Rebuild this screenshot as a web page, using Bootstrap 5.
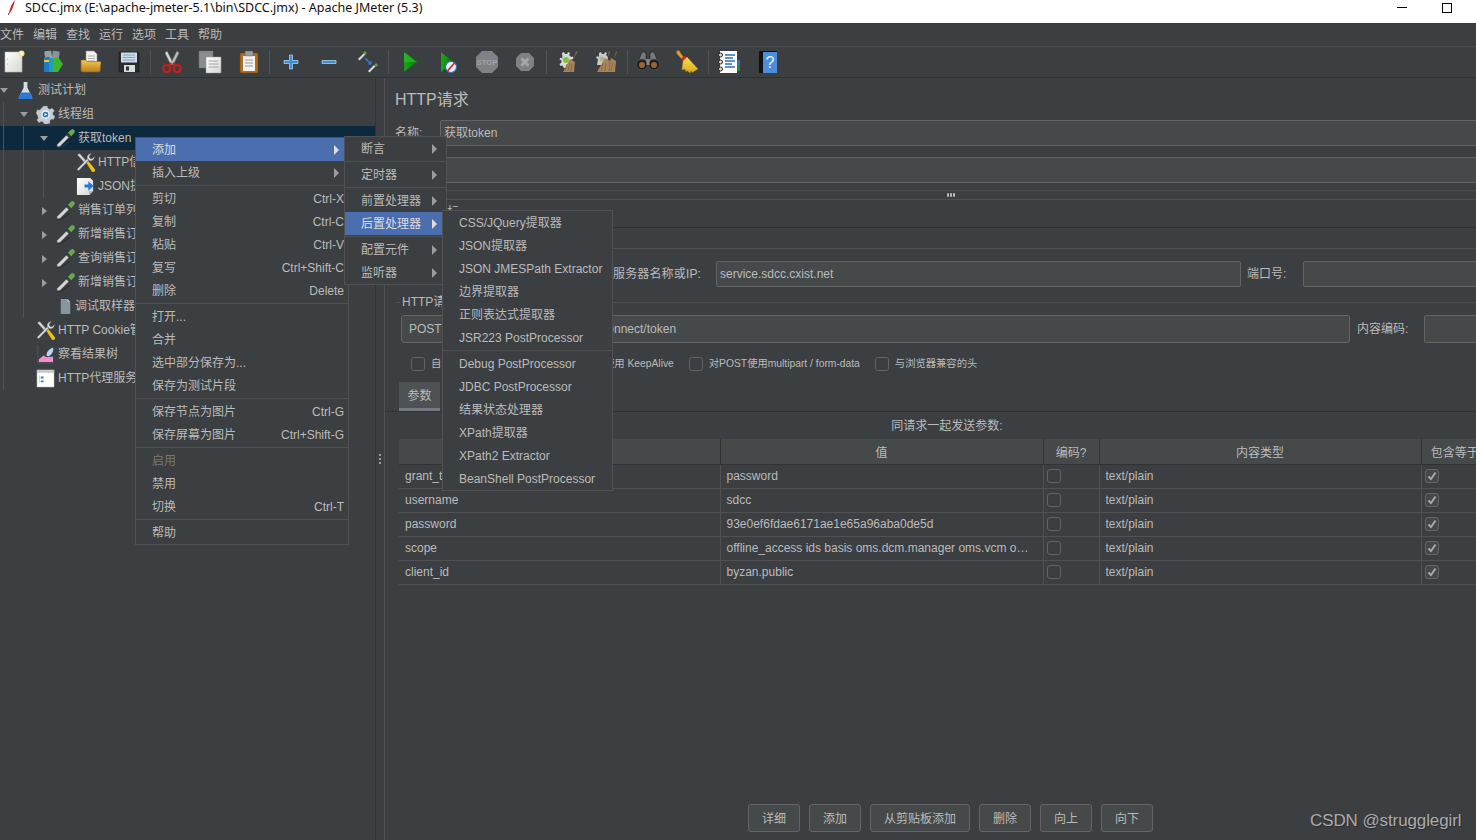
<!DOCTYPE html>
<html lang="zh-CN">
<head>
  <meta charset="UTF-8">
  <meta name="viewport" content="width=device-width,initial-scale=1">
  <title>SDCC.jmx - Apache JMeter (5.3)</title>
  <link href="https://cdn.jsdelivr.net/npm/bootstrap@5.3.3/dist/css/bootstrap.min.css" rel="stylesheet">
  <style>
    html,body{height:100%;overflow:hidden}
    body{background:#3c3f41;color:#bbb;font:12px/1.2 "Liberation Sans","Noto Sans CJK SC",sans-serif}
    .app{height:840px;width:1476px;overflow:hidden;position:relative}
    .win-title{height:23px;background:#fff;color:#111;font:12.5px "Noto Sans","Noto Sans CJK SC",sans-serif;padding:0 0 8px 8px;gap:9px;flex:none}
    .win-btns{margin-left:auto;gap:35px;padding-right:24px}
    .win-min{width:10px;height:1px;background:#000}
    .win-max{width:10px;height:10px;border:1px solid #000}
    .menu-strip{height:24px;gap:9px;padding-top:1px;border-bottom:1px solid #515151;flex:none}
    .tool-strip{height:30px;margin-left:-5px;flex:none}
    .tool-line{height:1px;background:#2f3233;flex:none}
    .tb-btn{width:38.4px;flex:none}
    .tb-btn svg{width:24px;height:24px;display:block;margin:0 auto}
    .tb-sep{width:4px;flex:none;height:24px;display:flex;justify-content:center}
    .tb-sep::before{content:"";width:1px;background:#515151}
    .main-area{flex:1;min-height:0}
    .tree-pane{width:375px;flex:none;overflow:hidden;isolation:isolate}
    .tn-row{height:24px;padding-top:1px;position:relative;white-space:nowrap}
    .tn-sel::before{content:"";position:absolute;inset:0 -400px;background:#0d293e;z-index:-1}
    .tn-arrow{width:16px;flex:none}
    .tn-arrow i{display:block}
    .arr-down{width:0;height:0;border:4px solid transparent;border-top:5px solid #9a9da0;border-bottom:0}
    .arr-right{width:0;height:0;margin-left:2px;border:4px solid transparent;border-left:5px solid #9a9da0;border-right:0}
    .tn-icon{width:22px;flex:none}
    .tn-icon svg{width:19px;height:19px;display:block}
    .tn-icon-narrow{width:19px}
    .tn-kids{margin-left:3px;border-left:1px solid #515151;padding-left:16px}
    .split-bar{width:10px;flex:none;border-left:1px solid #323232;border-right:1px solid #515151;gap:2px}
    .split-bar i{width:2px;height:2px;border-radius:50%;background:#bbb}
    .http-pane{flex:1;min-width:0;overflow:hidden}
    .pane-head{height:42px;padding:13px 0 0 10px;font-size:16px;line-height:18px;flex:none}
    .name-row{padding-left:10px;height:26px;flex:none}
    .name-row label{width:45px;flex:none;padding-top:1px}
    .j-input{background:#45494a;border:1px solid #646464;border-radius:2px;color:#bbb;font-size:12px;line-height:1;padding:0 3px;height:26px;box-shadow:none}
    .j-input:focus{background:#45494a;color:#bbb;border-color:#646464;box-shadow:none}
    .name-row .j-input{width:1100px;flex:none;padding-bottom:3px}
    .mt-11{margin-top:11px}
    .hsplit{height:10px;margin-top:7px;padding-left:40px;gap:1px;border-top:1px solid #515151;border-bottom:1px solid #515151;flex:none}
    .hsplit i{width:2px;height:4px;border-radius:1px;background:#bbb}
    .tab-top{height:28px;border-bottom:1px solid #323232;padding:6px 0 0 62px;flex:none;line-height:1}
    .tab-gap{height:21px;border-bottom:1px solid #515151;flex:none}
    .server-row{margin-top:12px;height:26px;padding-left:228px;flex:none}
    .server-row .j-input{height:100%}
    .srv-label{width:103px;flex:none;white-space:nowrap;letter-spacing:.15px}
    .srv-host{width:525px;flex:none;margin-right:6px}
    .srv-port-label{width:56px;flex:none;white-space:nowrap}
    .srv-port{width:300px;flex:none}
    .group-line{height:28px;margin-left:11px;padding-top:2px;flex:none}
    .group-line b{font-weight:400;width:4px;height:1px;background:#515151;margin-right:2px}
    .group-line span{flex:none}
    .group-line u{flex:1;height:1px;background:#515151;text-decoration:none}
    .path-row{height:28px;padding-left:16px;flex:none}
    .path-row .j-input{height:100%;padding-left:7px}
    .path-method{width:100px;flex:none;border-radius:3px}
    .path-url{width:760px;flex:none;margin-left:89px}
    .path-enc-label{width:60px;flex:none;margin:0 7px;white-space:nowrap}
    .path-enc{width:200px;flex:none}
    .opt-row{height:39px;padding:3px 0 0 26px;font-size:10.3px;gap:15px;flex:none;white-space:nowrap}
    .j-check{width:14px;height:14px;margin:0;flex:none;background-color:transparent;border:1px solid #646464;border-radius:2px;box-shadow:none}
    .j-check:checked{background-color:#45494a;border-color:#646464;background-image:url("data:image/svg+xml,%3csvg xmlns='http://www.w3.org/2000/svg' viewBox='0 0 14 14'%3e%3cpath fill='none' stroke='%23a9a9a9' stroke-width='2' d='M3.500 7.500l2.500 2.500 4.500-6.500'/%3e%3c/svg%3e");background-size:14px}
    .opt-item{gap:6px}
    .tab-strip{height:30px;padding-left:14px;border-bottom:1px solid #323232;flex:none}
    .tab-on{width:41px;height:29px;padding-top:3px;background:#4e5254;border-bottom:3px solid #747a80}
    .param-wrap{width:1096px;margin-left:14px;flex:none}
    .param-cap{height:27px;padding-top:2px}
    .param-tb{--bs-table-bg:transparent;--bs-table-color:#bbb;--bs-table-border-color:#515151;table-layout:fixed;width:1096px;font-size:12px;color:#bbb;margin:0}
    .param-tb th,.param-tb td{padding:0 6px;height:24px;vertical-align:middle;border-bottom:1px solid #515151;border-right:1px solid #515151;box-shadow:none;white-space:nowrap;overflow:hidden;text-overflow:ellipsis;line-height:1}
    .param-tb td.cell-check{padding-left:3px}
    .param-tb th{height:25px;padding-top:3px;background:#45494a;font-weight:400;text-align:center;border-color:#323232}
    .c-name{width:321px}.c-val{width:323px}.c-enc{width:56px}.c-type{width:322px}.c-eq{width:74px}
    .foot-btns{margin-top:auto;padding:0 0 8px 363px;gap:9px;flex:none}
    .j-btn{height:28px;width:52px;padding:2px 0 0;background:#45494a;border:1px solid #646464;border-radius:3px;color:#bbb;font-size:12px;line-height:1}
    .j-btn-wide{width:100px}
    .pop-menu{position:absolute;display:block;margin:0;padding:0;min-width:0;background:#3c3f41;border:1px solid #515151;border-radius:0;font-size:12px;--bs-dropdown-bg:#3c3f41}
    .pop-main{left:135px;top:137px;width:214px;z-index:1001}
    .pop-sub{left:344px;top:136px;width:103px;z-index:1002}
    .pop-post{left:442px;top:210px;width:171px;z-index:1003}
    .pop-menu .dropdown-item{height:23px;padding:0 4px 0 16px;color:#bbb;display:flex;align-items:center;justify-content:space-between;white-space:nowrap;line-height:1}
    .pop-menu .dropdown-item.active{background:#4b6eaf;color:#ddd}
    .pop-menu .dropdown-item.disabled{color:#777;background:none}
    .pop-menu .dropdown-divider{margin:1px 0;border-top:1px solid #515151;opacity:1}
    .pop-main .dropdown-item:nth-child(-n+2){padding-right:9px}
    .pop-sub .dropdown-item{padding-right:9px}
    .pop-arrow{width:0;height:0;border:5px solid transparent;border-left:5px solid #9a9da0;border-right:0}
    .active .pop-arrow{border-left-color:#ddd}
    .csdn-mark{position:absolute;left:1310px;top:810px;font-size:17px;line-height:22px;color:#a9abac;text-shadow:1px 1px 1px #2a2c2d;white-space:nowrap;letter-spacing:-.1px;z-index:1100}
  </style>
</head>
<body>
<svg width="0" height="0" class="position-absolute">
  <defs>
    <linearGradient id="gPage" x1="0" y1="0" x2="1" y2="1"><stop offset="0" stop-color="#fff"/><stop offset="1" stop-color="#d5d6d2"/></linearGradient>
    <linearGradient id="gFold" x1="0" y1="0" x2="0" y2="1"><stop offset="0" stop-color="#f4c657"/><stop offset="1" stop-color="#b9801c"/></linearGradient>
    <linearGradient id="gPlay" x1="0" y1="0" x2="1" y2="0"><stop offset="0" stop-color="#1aa51a"/><stop offset="1" stop-color="#0b7d0b"/></linearGradient>
    <linearGradient id="gBroom" x1="0" y1="0" x2="0" y2="1"><stop offset="0" stop-color="#f7e04e"/><stop offset="1" stop-color="#dba91c"/></linearGradient>
    <symbol id="i-new" viewBox="0 0 24 24"><rect x="3" y="2" width="17" height="20" fill="url(#gPage)" stroke="#b9b9b4" stroke-width=".6"/><circle cx="5.500" cy="9" r=".5" fill="#999"/><circle cx="5.500" cy="14" r=".5" fill="#999"/><circle cx="19.500" cy="3.500" r="3" fill="#f3e58a"/><circle cx="19.500" cy="3.500" r="1.500" fill="#fff9c9"/></symbol>
    <symbol id="i-tpl" viewBox="0 0 24 24"><rect x="4" y="1" width="7" height="13" rx="1" fill="#9aa0a3" transform="rotate(-8 7 7)"/><rect x="11" y="1" width="7" height="13" rx="1" fill="#8b9194" transform="rotate(8 14 7)"/><rect x="3" y="7" width="6" height="15" rx="1" fill="#1f7bc4"/><rect x="8" y="8" width="5" height="14" fill="#1da2b5"/><path d="M12 8h5v-1l5 7-5 8h-5z" fill="#3eb52b"/><path d="M3 10h5v2H3z" fill="#f0c636"/></symbol>
    <symbol id="i-open" viewBox="0 0 24 24"><path d="M7 1h8l3 3v11H7z" fill="#f2f2ee" stroke="#8d8d88" stroke-width=".6"/><path d="M9 6h7M9 8.500h7M9 11h7" stroke="#9a9a95" stroke-width=".8"/><path d="M2 10h5l1 1.500h13a1 1 0 0 1 1 1L21 21a1 1 0 0 1-1 1H4a2 2 0 0 1-2-2z" fill="url(#gFold)" stroke="#8f6313" stroke-width=".6"/></symbol>
    <symbol id="i-save" viewBox="0 0 24 24"><path d="M2 2h19l1 1v19H2z" fill="#2b2c2d" stroke="#111" stroke-width=".5"/><rect x="4" y="2.500" width="16" height="10" fill="#cbdaea"/><path d="M6 5h12M6 7.500h12M6 10h12" stroke="#7f96ad" stroke-width=".8"/><rect x="7" y="15" width="11" height="7" fill="#dcdcdc"/><rect x="9" y="16.500" width="3" height="4" fill="#333"/></symbol>
    <symbol id="i-cut" viewBox="0 0 24 24"><path d="M7 1l6 12-2 2L5 3z" fill="#d9d9d9" stroke="#777" stroke-width=".5"/><path d="M17 1l-6 12 2 2 6-12z" fill="#bdbdbd" stroke="#777" stroke-width=".5"/><circle cx="6.800" cy="18.500" r="3.500" fill="none" stroke="#d01b1b" stroke-width="2.200"/><circle cx="17.200" cy="18.500" r="3.500" fill="none" stroke="#d01b1b" stroke-width="2.200"/><path d="M9 15l2-2M15 15l-2-2" stroke="#d01b1b" stroke-width="2"/></symbol>
    <symbol id="i-copy" viewBox="0 0 24 24"><rect x="1" y="1" width="14" height="17" fill="#8a8d8f" stroke="#6d6f70" stroke-width=".5"/><path d="M8 7h15v16H8z" fill="url(#gPage)" stroke="#9a9a96" stroke-width=".5"/><path d="M10.500 11h10M10.500 14h10M10.500 17h10" stroke="#9e9e9a" stroke-width=".9"/></symbol>
    <symbol id="i-paste" viewBox="0 0 24 24"><rect x="3" y="3" width="18" height="20" rx="1" fill="#b06d1f" stroke="#744511" stroke-width=".6"/><rect x="6" y="6" width="12" height="15" fill="#f3f3ef"/><path d="M8 10h8M8 13h8M8 16h8" stroke="#8f8f8b" stroke-width=".9"/><rect x="8" y="1" width="8" height="5" rx="1" fill="#9a9c9e" stroke="#5f6062" stroke-width=".5"/></symbol>
    <symbol id="i-plus" viewBox="0 0 24 24"><path d="M10.500 5h3v5.500H19v3h-5.500V19h-3v-5.500H5v-3h5.500z" fill="#3f8fd6" stroke="#a9cdec" stroke-width=".8"/></symbol>
    <symbol id="i-minus" viewBox="0 0 24 24"><path d="M5 10.500h14v3H5z" fill="#3f8fd6" stroke="#a9cdec" stroke-width=".8"/></symbol>
    <symbol id="i-toggle" viewBox="0 0 24 24"><path d="M2 9l6-6 1.500 1.500-6 6z" fill="#d8d8d8"/><path d="M7 3l2-2 2 2-2 2z" fill="#5f9e4a"/><path d="M12 21l6-6 1.500 1.500-6 6z" fill="#d8d8d8"/><path d="M18 15l2-2 2 2-2 2z" fill="#5f9e4a"/><path d="M9 8l4.500 4.500" stroke="#2f80de" stroke-width="1.500"/><path d="M15.500 14.500h-4l4-4z" fill="#2f80de"/></symbol>
    <symbol id="i-play" viewBox="0 0 24 24"><path d="M6 2l13 10L6 22z" fill="url(#gPlay)" stroke="#0a6c0a" stroke-width=".4"/><path d="M6 2l13 10H6z" fill="#2cc22c" opacity=".6"/></symbol>
    <symbol id="i-playno" viewBox="0 0 24 24"><path d="M5 2l12 10L5 22z" fill="url(#gPlay)"/><circle cx="15" cy="17" r="5.500" fill="#e8f1f9" stroke="#2873c5" stroke-width="1.200"/><path d="M11.500 21l7-8" stroke="#d02424" stroke-width="1.600"/></symbol>
    <symbol id="i-stop" viewBox="0 0 24 24"><path d="M7 1h10l6 6v10l-6 6H7l-6-6V7z" fill="#7f8284"/><text x="12" y="15" text-anchor="middle" font-family="Liberation Sans" font-size="7.500" font-weight="700" fill="#a0a3a5">STOP</text></symbol>
    <symbol id="i-shut" viewBox="0 0 24 24"><path d="M8 3h8l5 5v8l-5 5H8l-5-5V8z" fill="#7f8284"/><path d="M8.500 8.500l7 7M15.500 8.500l-7 7" stroke="#a6a8aa" stroke-width="2.600"/></symbol>
    <symbol id="i-clear" viewBox="0 0 24 24"><path d="M6 3l2-1 1 2h2l1-2 2 1-1 2 2 2 2-.500.500 2-2 1v2l2 1-1 2-2-1-5 5-2-1-1-2-2 .500-1-2 2-1.500v-2l-2-1 1-2 2 1z" fill="#d9d9d6"/><circle cx="10" cy="10" r="3" fill="#7fc13e"/><path d="M20 1l1.500 1-4 7z" fill="#7d6a4a"/><path d="M14 9l5 3-1 10H7z" fill="#a8835a"/><path d="M11 14l-2 7M14 13l-2 8M16 14l-1 8" stroke="#7f5f3b" stroke-width=".7"/></symbol>
    <symbol id="i-clearall" viewBox="0 0 24 24"><path d="M5 3l2-1 1 2h2l1-2 2 1-1 2 2 2-1 8H3l1-6-2-1 1-2 2 1z" fill="#c9c9c6"/><circle cx="8" cy="9" r="2.500" fill="#a9b68f"/><path d="M15 1l1 1-3 7zM22 1l1 1-3 7z" fill="#7d6a4a"/><path d="M11 8l5 3-1 11H3z" fill="#a8835a"/><path d="M17 8l5 3-1 11h-8z" fill="#a8835a"/><path d="M9 13l-2 8M12 13l-1 8M19 13l-2 8M16 12l-1 9" stroke="#7f5f3b" stroke-width=".7"/></symbol>
    <symbol id="i-bino" viewBox="0 0 24 24"><path d="M5 4.500a2 2 0 0 1 5 0V9h4V4.500a2 2 0 0 1 5 0L22 12H2z" fill="#77797b" stroke="#222" stroke-width=".6"/><circle cx="6" cy="14.500" r="5.500" fill="#1f1f1f" stroke="#666" stroke-width=".5"/><circle cx="18" cy="14.500" r="5.500" fill="#1f1f1f" stroke="#666" stroke-width=".5"/><circle cx="6" cy="15" r="3" fill="#9c6435"/><circle cx="18" cy="15" r="3" fill="#9c6435"/><rect x="10.500" y="9" width="3" height="6" fill="#8a8a8a"/></symbol>
    <symbol id="i-broom" viewBox="0 0 24 24"><path d="M2 1c2-1 3 0 3.500 2L9 7.500 7 9.500 3 5C1.500 3.500 1 2 2 1z" fill="#d9a02c" stroke="#946a17" stroke-width=".4"/><path d="M6 8.500l3.500-2.500 2 2-3 3.500z" fill="#d22"/><path d="M8 11l4-4 11 12-6 3.500-1-2-1 2.500-3-2.500-1 1.500-1-3-3 1z" fill="url(#gBroom)" stroke="#b58b18" stroke-width=".4"/></symbol>
    <symbol id="i-log" viewBox="0 0 24 24"><rect x="3" y="1" width="17" height="22" fill="#fff"/><path d="M8 5h10M8 8h8M8 11h10M8 14h7M8 17h10" stroke="#2d6fc2" stroke-width="1.300"/><circle cx="3.500" cy="5" r="2" fill="#ddd" stroke="#222"/><circle cx="3.500" cy="12" r="2" fill="#ddd" stroke="#222"/><circle cx="3.500" cy="19" r="2" fill="#ddd" stroke="#222"/><rect x="20" y="10" width="3" height="6" fill="#2d6fc2"/><rect x="20" y="16" width="3" height="5" fill="#1a8d2e"/></symbol>
    <symbol id="i-help" viewBox="0 0 24 24"><rect x="3" y="1" width="18" height="22" rx="1" fill="#111"/><rect x="7" y="2" width="14" height="21" fill="#4d8ed8"/><text x="14" y="18" text-anchor="middle" font-family="Liberation Sans" font-size="16" fill="#e8f1fa">?</text></symbol>
    <symbol id="t-flask" viewBox="0 0 20 20"><path d="M8 1h4v6l5 10a1.500 1.500 0 0 1-1.500 2h-11A1.500 1.500 0 0 1 3 17L8 7z" fill="#d5dce3"/><path d="M5.500 12h9l3 6-1 1H3.500l-1-1z" fill="#2a78d6"/></symbol>
    <symbol id="t-gear" viewBox="0 0 20 20"><path d="M8 1h4l.500 2.500 2.200 1 2.300-1.300 2.500 3-1.800 2 .3 2.200 2 1.300-1.300 3.600-2.500-.300-1.600 1.700.3 2.500-3.700 1H8.500l-1-2.300-2.200-.500-2 1.500-2.500-3 1.500-2-.500-2.400L0 8.500 1.300 5l2.500.300L5.500 3.700z" fill="#c5ccd3" stroke="#6f7478" stroke-width=".4"/><circle cx="10" cy="10" r="4.500" fill="#eef1f4"/><circle cx="10" cy="10" r="3" fill="#2c72c0"/><path d="M9 8.500l3 1.500-3 1.500z" fill="#fff"/></symbol>
    <symbol id="t-pip" viewBox="0 0 20 20"><path d="M1.500 19.500c5 .5 8-3 12-6" stroke="#2d3032" stroke-width="1.500" fill="none"/><path d="M1 18.500l.5-2.500 9.500-9.500 2.500 2.500-9.500 9.500z" fill="#d7d7d7" stroke="#666" stroke-width=".4"/><path d="M10.500 6l1.500-1.500 3.500 3.500-1.500 1.500z" fill="#3e3e3e"/><path d="M12.500 4l3-3a2 2 0 0 1 3.500 3.500l-3 3z" fill="#6aa84f"/></symbol>
    <symbol id="t-tools" viewBox="0 0 20 20"><path d="M2 1l2-.5 8 9-2 2-8-9z" fill="#cfd2d4" stroke="#555" stroke-width=".4"/><path d="M11 10.500l2-2 6.500 8a2 2 0 0 1-3 3z" fill="#f2c21c" stroke="#7f6610" stroke-width=".4"/><path d="M1.500 16.500L12 6l1.500 1.500L3 18.500a1.400 1.400 0 0 1-1.500-2z" fill="#d5d7d9" stroke="#555" stroke-width=".4"/><path d="M12 6c-1-3 1-5.500 4.500-5.500L14 3l.5 2.500L17 6l2.500-2.500C19.500 7 17 9 14 8z" fill="#d5d7d9" stroke="#555" stroke-width=".4"/></symbol>
    <symbol id="t-json" viewBox="0 0 20 20"><path d="M1 1h14l3 3v11l-4 4H1z" fill="url(#gPage)"/><path d="M14 19l4-4h-4z" fill="#aaa"/><path d="M9 8h4V4.500l5.500 5-5.500 5V11H9z" fill="#1d78e0"/></symbol>
    <symbol id="t-file" viewBox="0 0 20 20"><path d="M5 2h7l3 3v13H5z" fill="#8795a1"/><path d="M12 2v3h3z" fill="#b6c0c8"/></symbol>
    <symbol id="t-chart" viewBox="0 0 20 20"><path d="M2 0v19h17" fill="none" stroke="#555" stroke-width="1"/><path d="M3 18v-3l5-4 3 2 7-1v6z" fill="#f08fd0"/><path d="M11 11c0-4 4-8 7-8 1 4-2 8-5 9z" fill="#b5d4f0"/></symbol>
    <symbol id="t-win" viewBox="0 0 20 20"><rect x="1" y="1" width="18" height="18" fill="#fff" stroke="#999" stroke-width=".5"/><rect x="1" y="1" width="18" height="3" fill="#c9c9c9"/><path d="M5 8h3v2H5zM5 12h3v2H5z" fill="#2d80cf"/><path d="M3.500 7v8" stroke="#555" stroke-width=".6" stroke-dasharray="1 1"/></symbol>
    <symbol id="i-feather" viewBox="0 0 8 15"><path d="M7 0C5 2 2 7 1 13l1 0c2-3 3-6 4-9z" fill="#c9252b"/><path d="M1 13l-1 2" stroke="#7b1a1d"/></symbol>
  </defs>
</svg>

<div class="app d-flex flex-column">
  <div class="win-title d-flex align-items-center">
    <svg width="8" height="15" class="flex-shrink-0"><use href="#i-feather"/></svg>
    <span>SDCC.jmx (E:\apache-jmeter-5.1\bin\SDCC.jmx) - Apache JMeter (5.3)</span>
    <div class="win-btns d-flex align-items-center"><i class="win-min"></i><i class="win-max"></i></div>
  </div>

  <nav class="menu-strip d-flex align-items-center">
    <span>文件</span><span>编辑</span><span>查找</span><span>运行</span><span>选项</span><span>工具</span><span>帮助</span>
  </nav>

  <div class="tool-strip d-flex align-items-center">
    <span class="tb-btn"><svg><use href="#i-new"/></svg></span>
    <span class="tb-btn"><svg><use href="#i-tpl"/></svg></span>
    <span class="tb-btn"><svg><use href="#i-open"/></svg></span>
    <span class="tb-btn"><svg><use href="#i-save"/></svg></span>
    <span class="tb-sep"></span>
    <span class="tb-btn"><svg><use href="#i-cut"/></svg></span>
    <span class="tb-btn"><svg><use href="#i-copy"/></svg></span>
    <span class="tb-btn"><svg><use href="#i-paste"/></svg></span>
    <span class="tb-sep"></span>
    <span class="tb-btn"><svg><use href="#i-plus"/></svg></span>
    <span class="tb-btn"><svg><use href="#i-minus"/></svg></span>
    <span class="tb-btn"><svg><use href="#i-toggle"/></svg></span>
    <span class="tb-sep"></span>
    <span class="tb-btn"><svg><use href="#i-play"/></svg></span>
    <span class="tb-btn"><svg><use href="#i-playno"/></svg></span>
    <span class="tb-btn"><svg><use href="#i-stop"/></svg></span>
    <span class="tb-btn"><svg><use href="#i-shut"/></svg></span>
    <span class="tb-sep"></span>
    <span class="tb-btn"><svg><use href="#i-clear"/></svg></span>
    <span class="tb-btn"><svg><use href="#i-clearall"/></svg></span>
    <span class="tb-sep"></span>
    <span class="tb-btn"><svg><use href="#i-bino"/></svg></span>
    <span class="tb-btn"><svg><use href="#i-broom"/></svg></span>
    <span class="tb-sep"></span>
    <span class="tb-btn"><svg><use href="#i-log"/></svg></span>
    <span class="tb-btn"><svg><use href="#i-help"/></svg></span>
  </div>
  <div class="tool-line"></div>

  <div class="main-area d-flex">
    <div class="tree-pane">
      <div class="tn-row d-flex align-items-center"><span class="tn-arrow"><i class="arr-down"></i></span><span class="tn-icon"><svg><use href="#t-flask"/></svg></span>测试计划</div>
      <div class="tn-kids">
        <div class="tn-row d-flex align-items-center"><span class="tn-arrow"><i class="arr-down"></i></span><span class="tn-icon"><svg><use href="#t-gear"/></svg></span>线程组</div>
        <div class="tn-kids">
          <div class="tn-row tn-sel d-flex align-items-center"><span class="tn-arrow"><i class="arr-down"></i></span><span class="tn-icon"><svg><use href="#t-pip"/></svg></span>获取token</div>
          <div class="tn-kids">
            <div class="tn-row d-flex align-items-center"><span class="tn-arrow"></span><span class="tn-icon"><svg><use href="#t-tools"/></svg></span>HTTP信息头管理器</div>
            <div class="tn-row d-flex align-items-center"><span class="tn-arrow"></span><span class="tn-icon"><svg><use href="#t-json"/></svg></span>JSON提取器</div>
          </div>
          <div class="tn-row d-flex align-items-center"><span class="tn-arrow"><i class="arr-right"></i></span><span class="tn-icon"><svg><use href="#t-pip"/></svg></span>销售订单列表</div>
          <div class="tn-row d-flex align-items-center"><span class="tn-arrow"><i class="arr-right"></i></span><span class="tn-icon"><svg><use href="#t-pip"/></svg></span>新增销售订单</div>
          <div class="tn-row d-flex align-items-center"><span class="tn-arrow"><i class="arr-right"></i></span><span class="tn-icon"><svg><use href="#t-pip"/></svg></span>查询销售订单</div>
          <div class="tn-row d-flex align-items-center"><span class="tn-arrow"><i class="arr-right"></i></span><span class="tn-icon"><svg><use href="#t-pip"/></svg></span>新增销售订单</div>
          <div class="tn-row d-flex align-items-center"><span class="tn-arrow"></span><span class="tn-icon tn-icon-narrow"><svg><use href="#t-file"/></svg></span>调试取样器</div>
        </div>
        <div class="tn-row d-flex align-items-center"><span class="tn-arrow"></span><span class="tn-icon"><svg><use href="#t-tools"/></svg></span>HTTP Cookie管理器</div>
        <div class="tn-row d-flex align-items-center"><span class="tn-arrow"></span><span class="tn-icon"><svg><use href="#t-chart"/></svg></span>察看结果树</div>
        <div class="tn-row d-flex align-items-center"><span class="tn-arrow"></span><span class="tn-icon"><svg><use href="#t-win"/></svg></span>HTTP代理服务器</div>
      </div>
    </div>

    <div class="split-bar d-flex flex-column align-items-center justify-content-center"><i></i><i></i><i></i></div>

    <div class="http-pane d-flex flex-column">
      <div class="pane-head">HTTP请求</div>
      <div class="name-row d-flex align-items-center">
        <label>名称:</label>
        <input class="form-control j-input" value="获取token">
      </div>
      <div class="name-row mt-11 d-flex align-items-center">
        <label>注释:</label>
        <input class="form-control j-input">
      </div>
      <div class="hsplit d-flex align-items-center justify-content-center"><i></i><i></i><i></i></div>
      <div class="tab-top">标</div>
      <div class="tab-gap"></div>
      <div class="server-row d-flex align-items-center">
        <span class="srv-label">服务器名称或IP:</span>
        <input class="form-control j-input srv-host" value="service.sdcc.cxist.net">
        <span class="srv-port-label">端口号:</span>
        <input class="form-control j-input srv-port">
      </div>
      <div class="group-line d-flex align-items-center"><b></b><span>HTTP请求</span><u class="ms-1"></u></div>
      <div class="path-row d-flex align-items-center">
        <input class="form-control j-input path-method" value="POST">
        <input class="form-control j-input path-url" value="/connect/token">
        <span class="path-enc-label">内容编码:</span>
        <input class="form-control j-input path-enc">
      </div>
      <div class="opt-row d-flex align-items-center">
        <span class="opt-item d-flex align-items-center"><input type="checkbox" class="form-check-input j-check">自动重定向</span>
        <span class="opt-item d-flex align-items-center"><input type="checkbox" class="form-check-input j-check">跟随重定向</span>
        <span class="opt-item d-flex align-items-center"><input type="checkbox" class="form-check-input j-check">使用 KeepAlive</span>
        <span class="opt-item d-flex align-items-center"><input type="checkbox" class="form-check-input j-check">对POST使用multipart / form-data</span>
        <span class="opt-item d-flex align-items-center"><input type="checkbox" class="form-check-input j-check">与浏览器兼容的头</span>
      </div>
      <div class="tab-strip d-flex">
        <div class="tab-on d-flex align-items-center justify-content-center">参数</div>
      </div>
      <div class="param-wrap">
        <div class="param-cap d-flex align-items-center justify-content-center">同请求一起发送参数:</div>
        <table class="table param-tb">
          <colgroup><col class="c-name"><col class="c-val"><col class="c-enc"><col class="c-type"><col class="c-eq"></colgroup>
          <thead><tr><th>名称:</th><th>值</th><th>编码?</th><th>内容类型</th><th>包含等于?</th></tr></thead>
          <tbody id="paramRows"></tbody>
        </table>
      </div>
      <div class="foot-btns d-flex">
        <button class="btn j-btn">详细</button>
        <button class="btn j-btn">添加</button>
        <button class="btn j-btn j-btn-wide">从剪贴板添加</button>
        <button class="btn j-btn">删除</button>
        <button class="btn j-btn">向上</button>
        <button class="btn j-btn">向下</button>
      </div>
    </div>
  </div>

  <ul class="dropdown-menu pop-menu pop-main list-unstyled">
    <li class="dropdown-item active">添加<i class="pop-arrow"></i></li>
    <li class="dropdown-item">插入上级<i class="pop-arrow"></i></li>
    <li class="dropdown-divider"></li>
    <li class="dropdown-item">剪切<span>Ctrl-X</span></li>
    <li class="dropdown-item">复制<span>Ctrl-C</span></li>
    <li class="dropdown-item">粘贴<span>Ctrl-V</span></li>
    <li class="dropdown-item">复写<span>Ctrl+Shift-C</span></li>
    <li class="dropdown-item">删除<span>Delete</span></li>
    <li class="dropdown-divider"></li>
    <li class="dropdown-item">打开...</li>
    <li class="dropdown-item">合并</li>
    <li class="dropdown-item">选中部分保存为...</li>
    <li class="dropdown-item">保存为测试片段</li>
    <li class="dropdown-divider"></li>
    <li class="dropdown-item">保存节点为图片<span>Ctrl-G</span></li>
    <li class="dropdown-item">保存屏幕为图片<span>Ctrl+Shift-G</span></li>
    <li class="dropdown-divider"></li>
    <li class="dropdown-item disabled">启用</li>
    <li class="dropdown-item">禁用</li>
    <li class="dropdown-item">切换<span>Ctrl-T</span></li>
    <li class="dropdown-divider"></li>
    <li class="dropdown-item">帮助</li>
  </ul>

  <ul class="dropdown-menu pop-menu pop-sub list-unstyled">
    <li class="dropdown-item">断言<i class="pop-arrow"></i></li>
    <li class="dropdown-divider"></li>
    <li class="dropdown-item">定时器<i class="pop-arrow"></i></li>
    <li class="dropdown-divider"></li>
    <li class="dropdown-item">前置处理器<i class="pop-arrow"></i></li>
    <li class="dropdown-item active">后置处理器<i class="pop-arrow"></i></li>
    <li class="dropdown-divider"></li>
    <li class="dropdown-item">配置元件<i class="pop-arrow"></i></li>
    <li class="dropdown-item">监听器<i class="pop-arrow"></i></li>
  </ul>

  <ul class="dropdown-menu pop-menu pop-post list-unstyled">
    <li class="dropdown-item">CSS/JQuery提取器</li>
    <li class="dropdown-item">JSON提取器</li>
    <li class="dropdown-item">JSON JMESPath Extractor</li>
    <li class="dropdown-item">边界提取器</li>
    <li class="dropdown-item">正则表达式提取器</li>
    <li class="dropdown-item">JSR223 PostProcessor</li>
    <li class="dropdown-divider"></li>
    <li class="dropdown-item">Debug PostProcessor</li>
    <li class="dropdown-item">JDBC PostProcessor</li>
    <li class="dropdown-item">结果状态处理器</li>
    <li class="dropdown-item">XPath提取器</li>
    <li class="dropdown-item">XPath2 Extractor</li>
    <li class="dropdown-item">BeanShell PostProcessor</li>
  </ul>

  <div class="csdn-mark">CSDN @strugglegirl</div>
</div>

<script src="https://cdn.jsdelivr.net/npm/bootstrap@5.3.3/dist/js/bootstrap.bundle.min.js"></script>
<script>
const params=[
  ["grant_type","password"],
  ["username","sdcc"],
  ["password","93e0ef6fdae6171ae1e65a96aba0de5d"],
  ["scope","offline_access ids basis oms.dcm.manager oms.vcm oms.order"],
  ["client_id","byzan.public"]
];
document.getElementById("paramRows").innerHTML=params.map(p=>`
  <tr><td>${p[0]}</td><td>${p[1]}</td>
  <td class="cell-check"><input type="checkbox" class="form-check-input j-check d-block"></td>
  <td>text/plain</td>
  <td class="cell-check"><input type="checkbox" class="form-check-input j-check d-block" checked></td></tr>`).join("");
</script>
</body>
</html>
